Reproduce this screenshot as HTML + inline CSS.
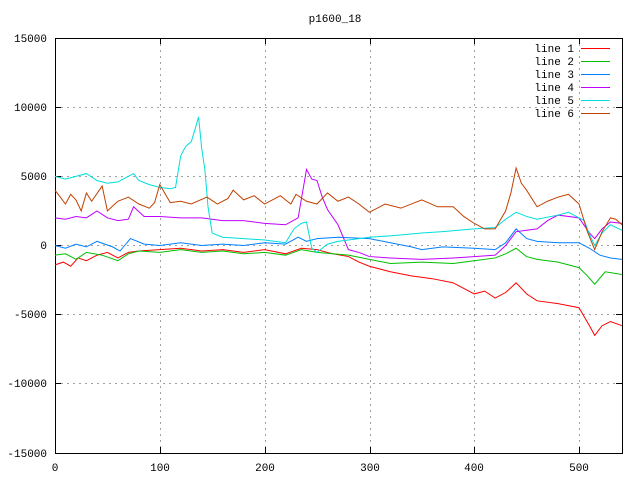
<!DOCTYPE html>
<html><head><style>
html,body{margin:0;padding:0;background:#fff;}
svg{display:block;font-family:"Liberation Mono","DejaVu Sans Mono",monospace;font-size:11px;}
</style></head><body>
<svg width="640" height="480" viewBox="0 0 640 480">
<rect width="640" height="480" fill="#fff"/>
<text x="335" y="22" text-anchor="middle">p1600_18</text>
<g stroke="#a0a0a0" stroke-dasharray="2,4" stroke-width="1">
<line x1="160.5" y1="38" x2="160.5" y2="453"/>
<line x1="265.5" y1="38" x2="265.5" y2="453"/>
<line x1="370.5" y1="38" x2="370.5" y2="453"/>
<line x1="474.5" y1="38" x2="474.5" y2="453"/>
<line x1="579.5" y1="38" x2="579.5" y2="453"/>
<line x1="55" y1="107.5" x2="622" y2="107.5"/>
<line x1="55" y1="176.5" x2="622" y2="176.5"/>
<line x1="55" y1="245.5" x2="622" y2="245.5"/>
<line x1="55" y1="314.5" x2="622" y2="314.5"/>
<line x1="55" y1="383.5" x2="622" y2="383.5"/>
</g>
<rect x="55.5" y="38.5" width="567" height="415" fill="none" stroke="#000"/>
<g stroke="#000">
<path d="M55 107.5h6M55 176.5h6M55 245.5h6M55 314.5h6M55 383.5h6M622 107.5h-6M622 176.5h-6M622 245.5h-6M622 314.5h-6M622 383.5h-6M160.5 453v-6M265.5 453v-6M370.5 453v-6M474.5 453v-6M579.5 453v-6M160.5 38v6M265.5 38v6M370.5 38v6M474.5 38v6M579.5 38v6"/>
</g>
<g text-anchor="end">
<text x="47" y="42">15000</text><text x="47" y="111">10000</text><text x="47" y="180">5000</text>
<text x="47" y="249">0</text><text x="47" y="318">-5000</text><text x="47" y="387">-10000</text><text x="47" y="457">-15000</text>
</g>
<g text-anchor="middle">
<text x="55" y="471">0</text><text x="160" y="471">100</text><text x="265" y="471">200</text>
<text x="370" y="471">300</text><text x="474" y="471">400</text><text x="579" y="471">500</text>
</g>
<g transform="translate(55,245.5) scale(1.048,-0.01383)" fill="none" stroke-width="1" vector-effect="non-scaling-stroke">
<polyline vector-effect="non-scaling-stroke" stroke="#ff0000" points="0,-1400 8,-1200 15,-1500 22,-900 30,-1100 40,-700 50,-500 60,-900 70,-500 80,-400 100,-300 120,-200 140,-400 160,-300 180,-500 200,-300 220,-600 235,-200 250,-300 265,-600 280,-800 290,-1200 300,-1500 320,-1900 340,-2200 360,-2400 380,-2700 400,-3500 410,-3300 420,-3800 430,-3400 440,-2700 450,-3500 460,-4000 480,-4200 500,-4500 510,-5800 515,-6500 522,-5800 530,-5500 541,-5800"/>
<polyline vector-effect="non-scaling-stroke" stroke="#00c000" points="0,-700 10,-600 20,-1000 30,-500 45,-700 60,-1100 70,-600 80,-400 100,-500 120,-300 140,-500 160,-400 180,-600 200,-500 220,-700 235,-300 250,-500 265,-600 280,-700 300,-1000 320,-1300 350,-1200 380,-1300 400,-1100 420,-900 430,-600 440,-200 450,-800 460,-1000 480,-1200 500,-1600 508,-2200 515,-2800 525,-1900 541,-2100"/>
<polyline vector-effect="non-scaling-stroke" stroke="#0080ff" points="0,0 10,-200 20,100 30,-100 40,300 55,-100 62,-400 72,500 85,100 100,0 120,200 140,0 160,100 180,0 200,200 220,100 232,600 240,300 250,500 270,600 300,500 320,200 340,-100 350,-300 370,-100 400,-200 420,-300 430,200 440,1200 450,500 460,300 480,200 500,200 510,-200 520,-700 530,-900 541,-1000"/>
<polyline vector-effect="non-scaling-stroke" stroke="#c000ff" points="0,2000 10,1900 20,2100 30,2000 40,2500 50,2000 60,1800 70,1900 75,2800 85,2100 100,2100 120,2000 140,2000 160,1800 180,1800 200,1600 220,1500 232,2000 240,5500 245,4800 250,4700 255,3500 260,2600 270,1500 280,-300 290,-500 300,-800 320,-900 350,-1000 380,-900 400,-800 420,-700 430,0 440,1000 450,1100 460,1200 470,1800 480,2200 500,2000 510,900 515,500 522,1200 530,1700 541,1600"/>
<polyline vector-effect="non-scaling-stroke" stroke="#00dddd" points="0,5000 10,4800 20,5000 30,5200 40,4700 50,4500 60,4600 70,5000 75,5200 80,4700 90,4400 100,4200 110,4100 115,4200 120,6500 125,7200 130,7500 134,8500 137,9300 140,7000 143,5500 146,2800 150,900 160,600 180,500 200,400 220,200 228,1200 235,1600 240,1700 245,-200 250,-500 260,100 270,300 290,500 300,600 320,700 350,900 370,1000 400,1200 420,1300 430,1900 440,2400 450,2100 460,1900 480,2200 490,2400 505,1800 510,800 515,0 522,900 530,1500 541,1100"/>
<polyline vector-effect="non-scaling-stroke" stroke="#c04000" points="0,4000 5,3500 10,3000 15,3700 20,3300 25,2500 30,3800 35,3200 45,4300 50,2500 60,3200 70,3500 80,3000 90,2700 95,3100 100,4400 110,3100 120,3200 130,3000 145,3500 155,3000 165,3400 170,4000 180,3300 190,3600 200,3000 215,3600 225,3000 230,3700 240,3200 250,3000 260,3800 270,3200 280,3500 290,3000 300,2400 315,3000 330,2700 350,3300 365,2800 380,2800 390,2100 400,1600 410,1200 420,1200 430,2500 435,3800 440,5600 445,4500 450,4000 460,2800 470,3200 480,3500 490,3700 500,3000 508,1000 515,-300 522,1000 530,2000 535,1900 541,1500"/>
</g>
<g text-anchor="end">
<text x="574" y="52">line 1</text><text x="574" y="65">line 2</text><text x="574" y="78">line 3</text>
<text x="574" y="91">line 4</text><text x="574" y="104">line 5</text><text x="574" y="117">line 6</text>
</g>
<g stroke-width="1">
<line x1="581" y1="48.5" x2="610" y2="48.5" stroke="#ff0000"/>
<line x1="581" y1="61.5" x2="610" y2="61.5" stroke="#00c000"/>
<line x1="581" y1="74.5" x2="610" y2="74.5" stroke="#0080ff"/>
<line x1="581" y1="87.5" x2="610" y2="87.5" stroke="#c000ff"/>
<line x1="581" y1="100.5" x2="610" y2="100.5" stroke="#00dddd"/>
<line x1="581" y1="113.5" x2="610" y2="113.5" stroke="#c04000"/>
</g>
</svg>
</body></html>
